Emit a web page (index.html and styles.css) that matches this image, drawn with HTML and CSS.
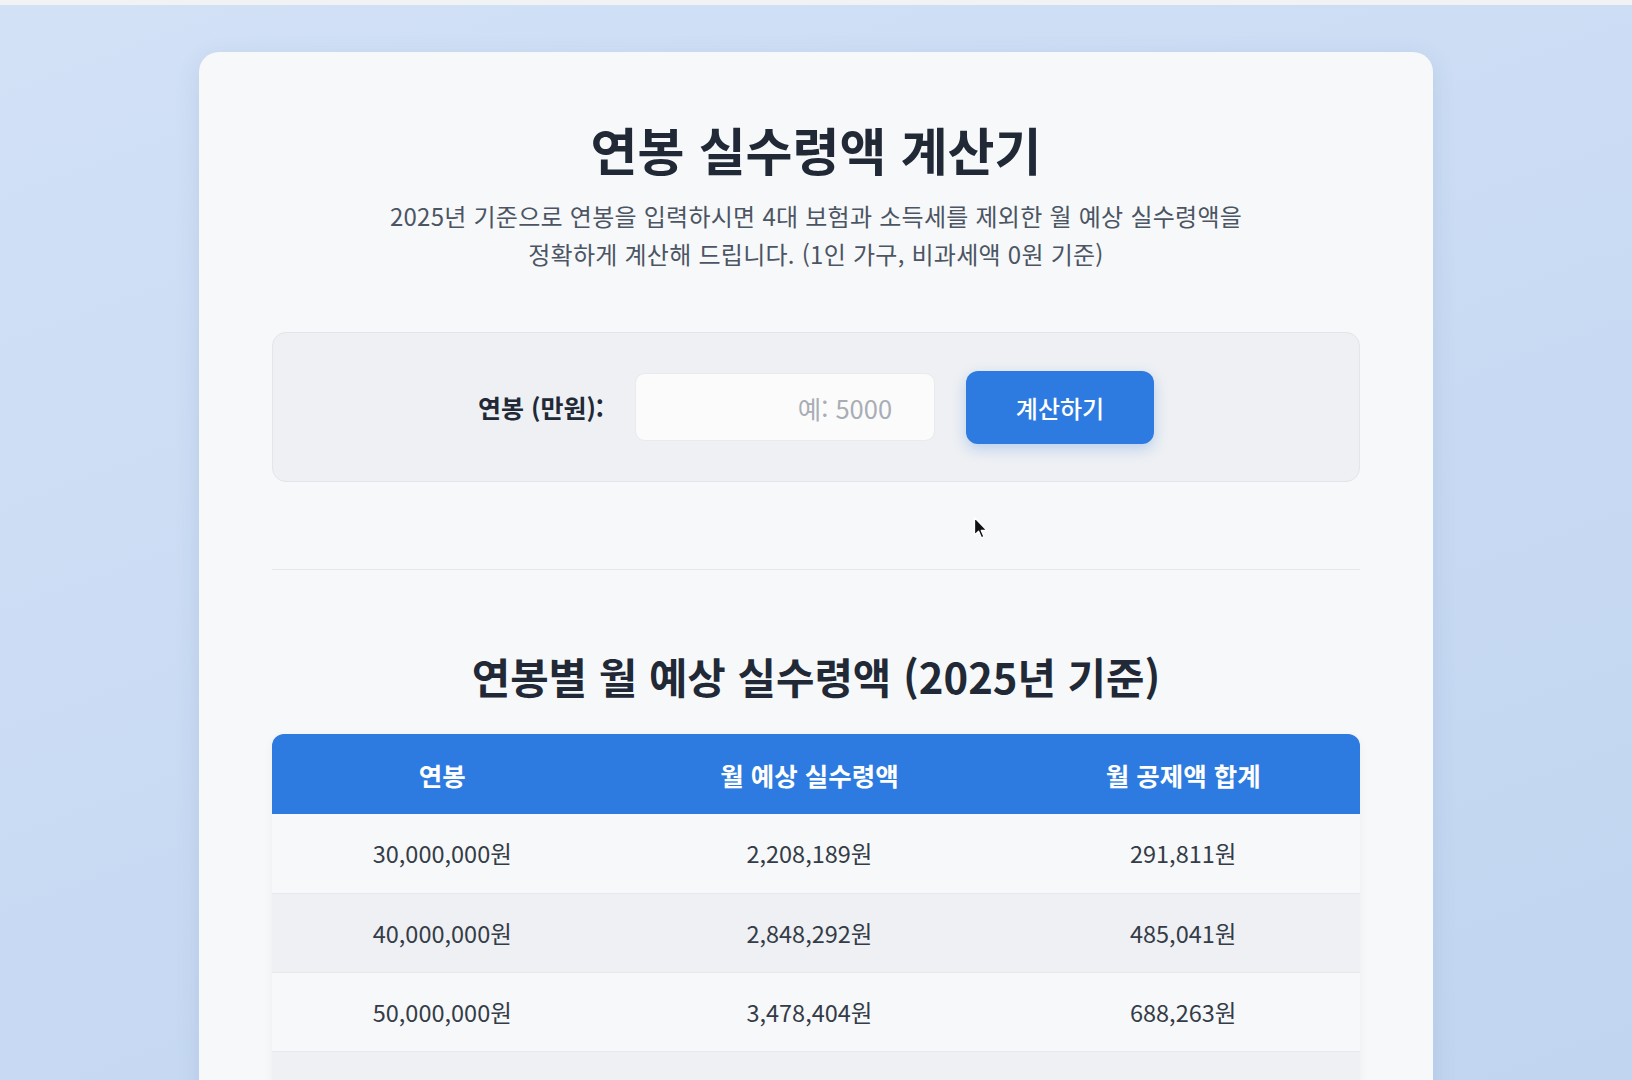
FILE: index.html
```html
<!DOCTYPE html>
<html lang="ko">
<head>
<meta charset="utf-8">
<title>연봉 실수령액 계산기</title>
<link rel="stylesheet" href="styles.css">
</head>
<body>
<div class="topstrip"></div>
<main class="card">
  <h1 class="title">연봉 실수령액 계산기</h1>
  <p class="subtitle">2025년 기준으로 연봉을 입력하시면 4대 보험과 소득세를 제외한 월 예상 실수령액을<br>정확하게 계산해 드립니다. (1인 가구, 비과세액 0원 기준)</p>

  <section class="calc">
    <label class="calc-label" for="salary">연봉 (만원):</label>
    <input class="calc-input" id="salary" type="text" placeholder="예: 5000">
    <button class="calc-btn" type="button">계산하기</button>
  </section>

  <hr class="divider">

  <h2 class="section-title">연봉별 월 예상 실수령액 (2025년 기준)</h2>

  <div class="table-wrap">
    <table class="salary-table">
      <colgroup>
        <col class="col-salary">
        <col class="col-net">
        <col class="col-deduct">
      </colgroup>
      <thead>
        <tr><th>연봉</th><th>월 예상 실수령액</th><th>월 공제액 합계</th></tr>
      </thead>
      <tbody>
        <tr><td>30,000,000원</td><td>2,208,189원</td><td>291,811원</td></tr>
        <tr><td>40,000,000원</td><td>2,848,292원</td><td>485,041원</td></tr>
        <tr><td>50,000,000원</td><td>3,478,404원</td><td>688,263원</td></tr>
        <tr><td>60,000,000원</td><td>4,075,118원</td><td>924,882원</td></tr>
        <tr><td>70,000,000원</td><td>4,634,596원</td><td>1,198,737원</td></tr>
      </tbody>
    </table>
  </div>
</main>
<svg class="cursor" width="16" height="24" viewBox="0 0 16 24" aria-hidden="true">
  <path d="M1.5 1.5 L1.5 19 L5.6 15.3 L8.4 21.8 L11 20.7 L8.3 14.4 L13.8 14.4 Z" fill="#111" stroke="#fff" stroke-width="1.3" stroke-linejoin="round"/>
</svg>
</body>
</html>
```
FILE: styles.css
```css
* { box-sizing: border-box; }

html, body {
  margin: 0;
  padding: 0;
}

body {
  font-family: "Noto Sans CJK KR", "Noto Sans", sans-serif;
  background: linear-gradient(160deg, #d2e1f6 0%, #c8daf3 50%, #bfd3ef 100%);
  min-height: 100vh;
  padding-bottom: 60px;
  position: relative;
}

.topstrip {
  height: 5px;
  background: #f1f2f4;
  margin-bottom: 47px;
}

.card {
  width: 1234px;
  margin: 0 auto;
  background: #f7f8f9;
  border-radius: 20px;
  padding: 66px 73px 72px;
  box-shadow: 0 6px 24px rgba(60, 90, 140, 0.12);
}

.title {
  margin: 0;
  text-align: center;
  font-size: 51px;
  line-height: 62px;
  font-weight: 700;
  color: #212936;
}

.subtitle {
  margin: 17px 0 0;
  text-align: center;
  font-size: 24px;
  letter-spacing: 0.25px;
  line-height: 38px;
  font-weight: 400;
  color: #4b5563;
}

.calc {
  margin-top: 59px;
  height: 150px;
  background: #eef0f3;
  border: 1px solid #e2e5e9;
  border-radius: 14px;
  display: flex;
  align-items: center;
  justify-content: center;
  gap: 31px;
}

.calc-label {
  font-size: 25px;
  font-weight: 700;
  color: #212936;
}

.calc-input {
  width: 300px;
  height: 68px;
  border: 1px solid #e8eaed;
  border-radius: 10px;
  background: #fbfbfc;
  font-family: inherit;
  font-size: 25.5px;
  text-align: right;
  padding: 0 42px 0 16px;
  color: #333;
  outline: none;
}

.calc-input::placeholder {
  color: #a9adb4;
}

.calc-btn {
  width: 188px;
  height: 73px;
  border: none;
  border-radius: 12px;
  background: #2d7be0;
  color: #fff;
  font-family: inherit;
  font-size: 24px;
  font-weight: 500;
  box-shadow: 0 5px 14px rgba(45, 123, 224, 0.28);
  cursor: pointer;
}

.divider {
  margin: 87px 0 0;
  border: none;
  border-top: 1px solid #e4e7eb;
}

.section-title {
  margin: 80px 0 0;
  text-align: center;
  font-size: 41.8px;
  line-height: 52px;
  font-weight: 700;
  color: #212936;
}

.table-wrap {
  margin-top: 32px;
  border-radius: 12px 12px 0 0;
  overflow: hidden;
  box-shadow: 0 2px 10px rgba(0, 0, 0, 0.05);
}

.salary-table {
  width: 100%;
  border-collapse: collapse;
  table-layout: fixed;
}

.col-salary { width: 31.3%; }
.col-net { width: 36.2%; }
.col-deduct { width: 32.5%; }

.salary-table th {
  background: #2d7be0;
  color: #fff;
  height: 80px;
  font-size: 25.5px;
  font-weight: 600;
  text-align: center;
}

.salary-table td {
  height: 79px;
  text-align: center;
  font-size: 23.5px;
  font-weight: 400;
  color: #343c48;
  border-bottom: 1px solid #e6e8ec;
  background: #f7f8f9;
}

.salary-table tbody tr:nth-child(even) td {
  background: #eef0f3;
}

.cursor {
  position: absolute;
  left: 973px;
  top: 516px;
}
```
